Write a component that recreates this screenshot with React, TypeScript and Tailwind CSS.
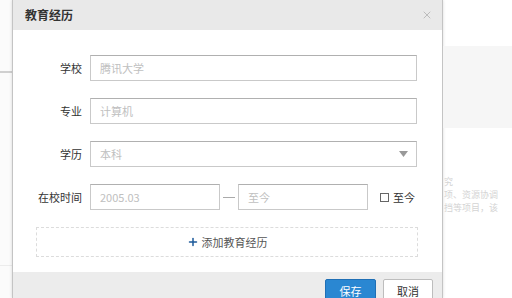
import { Plus, X } from "lucide-react";

const font = { fontFamily: '"Noto Sans CJK SC", "Noto Sans", sans-serif' };

function Row({ label, children }: { label: string; children: React.ReactNode }) {
  return (
    <div className="flex h-[26px] items-center">
      <span className="w-[77px] pr-[8px] text-right text-[11px] text-[#333]">{label}</span>
      {children}
    </div>
  );
}

function Field({ placeholder, className = "", arrow = false }: { placeholder: string; className?: string; arrow?: boolean }) {
  return (
    <div
      className={`flex h-[26px] items-center justify-between border border-[#c9c9c9] border-t-[#b0b0b0] bg-white pl-[9px] pr-[8px] text-[11px] text-[#c0c0c0] ${className}`}
    >
      {placeholder}
      {arrow && (
        <svg width="9" height="6" viewBox="0 0 9 6">
          <path d="M0 0h9L4.5 6z" fill="#999" />
        </svg>
      )}
    </div>
  );
}

export default function App() {
  return (
    <div className="flex h-[298px] w-[512px] overflow-hidden bg-white" style={font}>
      {/* page behind, left */}
      <div className="flex w-[12px] flex-col bg-[#fbfbfb]">
        <div className="h-[71px]" />
        <div className="h-[2px] bg-[#d0d0d0]" />
        <div className="h-[192px]" />
        <div className="h-px bg-[#ececec]" />
      </div>

      {/* dialog */}
      <div className="flex w-[431px] flex-col border-x border-[#c4c4c4] shadow-[0_0_3px_rgba(0,0,0,0.15)]">
        <div className="flex h-[30px] items-center justify-between bg-[#e9e9e9] pl-[12px] pr-[9px]">
          <span className="text-[12px] font-bold text-[#333]">教育经历</span>
          <X size={12} strokeWidth={1.6} className="text-[#b0b0b0]" />
        </div>

        <div className="flex flex-1 flex-col gap-[17px] bg-white pt-[25px]">
          <Row label="学校">
            <Field placeholder="腾讯大学" className="w-[327px]" />
          </Row>
          <Row label="专业">
            <Field placeholder="计算机" className="w-[327px]" />
          </Row>
          <Row label="学历">
            <Field placeholder="本科" className="w-[327px]" arrow />
          </Row>
          <Row label="在校时间">
            <Field placeholder="2005.03" className="w-[130px]" />
            <span className="mx-[3px] h-px w-[12px] bg-[#aaa]" />
            <Field placeholder="至今" className="w-[130px]" />
            <label className="ml-[12px] flex items-center gap-[4px] text-[11px] text-[#333]">
              <span className="h-[9px] w-[9px] border border-[#666] bg-white" />
              至今
            </label>
          </Row>
          <div className="ml-[23px] flex h-[30px] w-[382px] items-center justify-center gap-[3px] border border-dashed border-[#dcdcdc] text-[11px] text-[#555]">
            <Plus size={12} strokeWidth={3} className="text-[#1d5a9a]" />
            添加教育经历
          </div>
        </div>

        <div className="flex h-[26px] justify-end gap-[7px] bg-[#ececec] pr-[9px] pt-[7px]">
          <button className="h-[24px] w-[51px] rounded-[2px] border border-[#1f6fb5] bg-[#2a87d2] text-[11px] text-white">
            保存
          </button>
          <button className="h-[24px] w-[50px] rounded-[2px] border border-[#bdbdbd] bg-white text-[11px] text-[#333]">
            取消
          </button>
        </div>
      </div>

      {/* page behind, right */}
      <div className="flex flex-1 flex-col text-[9px] text-[#d4d4d4]">
        <div className="h-[46px]" />
        <div className="h-[82px] bg-[#f6f6f6]" />
        <div className="flex flex-col gap-[1px] whitespace-nowrap pl-[1px] pt-[48px] leading-[12px]">
          <span>究</span>
          <span>项、资源协调</span>
          <span>挡等项目，该</span>
        </div>
      </div>
    </div>
  );
}
